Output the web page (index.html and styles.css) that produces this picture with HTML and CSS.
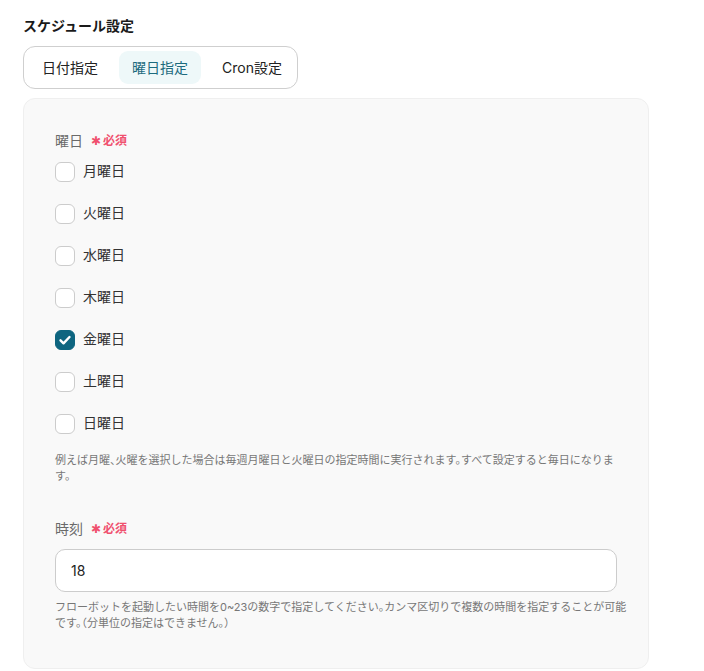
FILE: index.html
```html
<!DOCTYPE html>
<html lang="ja">
<head>
<meta charset="utf-8">
<link rel="stylesheet" href="styles.css">
</head>
<body>
<div class="page">
  <div class="title">スケジュール設定</div>
  <div class="tabs">
    <div class="tab">日付指定</div>
    <div class="tab active">曜日指定</div>
    <div class="tab">Cron設定</div>
  </div>
  <div class="panel">
    <div class="label">曜日<span class="req"><span class="ast">✱</span>必須</span></div>
    <div class="options">
      <div class="option"><span class="box"></span><span class="opt-text">月曜日</span></div>
      <div class="option"><span class="box"></span><span class="opt-text">火曜日</span></div>
      <div class="option"><span class="box"></span><span class="opt-text">水曜日</span></div>
      <div class="option"><span class="box"></span><span class="opt-text">木曜日</span></div>
      <div class="option"><span class="box checked"><svg viewBox="0 0 20 20" width="20" height="20"><path d="M5.5 10.3l3 3 6-6.3" fill="none" stroke="#fff" stroke-width="2.4" stroke-linecap="round" stroke-linejoin="round"/></svg></span><span class="opt-text">金曜日</span></div>
      <div class="option"><span class="box"></span><span class="opt-text">土曜日</span></div>
      <div class="option"><span class="box"></span><span class="opt-text">日曜日</span></div>
    </div>
    <p class="help">例えば月曜、火曜を選択した場合は毎週月曜日と火曜日の指定時間に実行されます。すべて設定すると毎日になります。</p>
    <div class="label label-time">時刻<span class="req"><span class="ast">✱</span>必須</span></div>
    <div class="input">18</div>
    <p class="help help-time">フローボットを起動したい時間を0~23の数字で指定してください。カンマ区切りで複数の時間を指定することが可能です。（分単位の指定はできません。）</p>
  </div>
</div>
</body>
</html>
```

FILE: styles.css
```css
* { box-sizing: border-box; }
html, body { margin: 0; padding: 0; background: #fff; }
body {
  font-family: "Inter", "Noto Sans CJK JP", sans-serif;
  color: #222;
}
.page {
  padding: 16px 55px 0 23px;
}
.title {
  font-size: 14px;
  font-weight: 700;
  line-height: 20px;
  color: #1a1a1a;
}
.tabs {
  margin-top: 10px;
  display: inline-flex;
  gap: 8px;
  padding: 4px 2px 4px 5px;
  border: 1px solid #cfcfcf;
  border-radius: 12px;
  background: #fff;
}
.tab {
  height: 33px;
  line-height: 33px;
  padding: 0 13px;
  font-size: 14px;
  color: #222;
  border-radius: 9px;
}
.tab.active {
  background: #eef8f9;
  color: #1d6b7e;
}
.panel {
  margin-top: 9px;
  background: #f9f9f9;
  border: 1px solid #efefef;
  border-radius: 12px;
  padding: 32px 31px 37px 31px;
}
.label {
  font-size: 14px;
  line-height: 20px;
  color: #6a6a6a;
  display: flex;
  align-items: center;
}
.req {
  margin-left: 8px;
  font-size: 12px;
  font-weight: 600;
  color: #f0506e;
  display: inline-flex;
  align-items: center;
}
.ast {
  font-size: 12px;
  font-weight: 400;
  margin-right: 2px;
}
.options {
  margin-top: 6px;
  display: flex;
  flex-direction: column;
  gap: 16px;
}
.option {
  height: 26px;
  display: flex;
  align-items: center;
}
.box {
  width: 20px;
  height: 20px;
  margin-top: 4px;
  border: 1.5px solid #cccccc;
  border-radius: 6px;
  background: #fff;
  display: flex;
  align-items: center;
  justify-content: center;
}
.box.checked {
  background: #0e6580;
  border-color: #0e6580;
}
.box.checked svg { flex: none; }
.opt-text {
  margin-left: 8px;
  font-size: 14px;
  color: #333;
}
.help {
  margin: 17px 0 0;
  font-size: 11px;
  line-height: 16px;
  color: #777;
  font-feature-settings: "halt";
}
.label-time {
  margin-top: 35px;
}
.input {
  margin-top: 10px;
  height: 43px;
  border: 1px solid #cccccc;
  border-radius: 10px;
  background: #fff;
  padding: 0 15px;
  font-size: 14px;
  line-height: 41px;
  color: #222;
}
.help.help-time {
  margin-top: 7px;
  margin-right: -10px;
}
```
